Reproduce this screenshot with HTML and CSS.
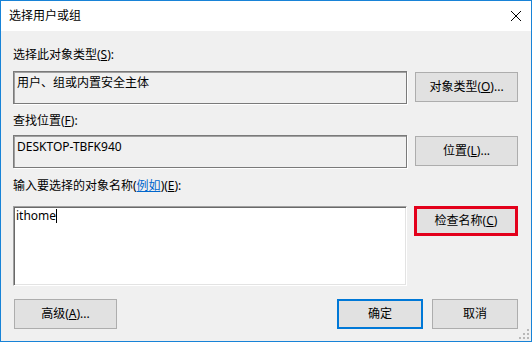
FILE: index.html
```
<!DOCTYPE html>
<html lang="zh-CN">
  <head>
    <meta charset="utf-8">
    <title>选择用户或组</title>
    <link rel="stylesheet" href="styles.css">
  </head>
  <body>
    <div class="window">
      <div class="titlebar">
        <span class="title">选择用户或组</span>
        <svg class="close" width="12" height="12" viewBox="0 0 12 12">
          <path d="M1 1 L11 11 M11 1 L1 11" stroke="#000" stroke-width="1" fill="none"/>
        </svg>
      </div>

      <div class="content">
        <div class="label">选择此对象类型(<u>S</u>):</div>
        <div class="row row-1">
          <div class="field readonly">用户、组或内置安全主体</div>
          <button class="btn">对象类型(<u>O</u>)...</button>
        </div>

        <div class="label label-2">查找位置(<u>F</u>):</div>
        <div class="row row-2">
          <div class="field readonly">DESKTOP-TBFK940</div>
          <button class="btn">位置(<u>L</u>)...</button>
        </div>

        <div class="label label-3">输入要选择的对象名称(<a href="#">例如</a>)(<u>E</u>):</div>
        <div class="row row-3">
          <div class="field editable">ithome<span class="caret"></span></div>
          <button class="btn marked">检查名称(<u>C</u>)</button>
        </div>

        <div class="footer">
          <button class="btn btn-advanced">高级(<u>A</u>)...</button>
          <div class="actions">
            <button class="btn btn-wide default">确定</button>
            <button class="btn btn-wide">取消</button>
          </div>
        </div>
      </div>

      <svg class="grip" width="10" height="10" viewBox="0 0 10 10">
        <rect x="8" y="0" width="2" height="2" fill="#b8b8b8"/>
        <rect x="4" y="4" width="2" height="2" fill="#b8b8b8"/>
        <rect x="8" y="4" width="2" height="2" fill="#b8b8b8"/>
        <rect x="0" y="8" width="2" height="2" fill="#b8b8b8"/>
        <rect x="4" y="8" width="2" height="2" fill="#b8b8b8"/>
        <rect x="8" y="8" width="2" height="2" fill="#b8b8b8"/>
      </svg>
    </div>
  </body>
</html>
```

FILE: styles.css
```
html, body { margin: 0; padding: 0; }
body {
  font-family: "Noto Sans", "Noto Sans CJK SC", sans-serif;
  font-size: 12px;
  color: #000;
  background: #f0f0f0;
}

.window {
  position: relative;
  width: 532px;
  height: 342px;
  box-sizing: border-box;
  border: 1px solid #1883d7;
  background: #f0f0f0;
}

.titlebar {
  height: 30px;
  background: #fff;
  display: flex;
  align-items: center;
  justify-content: space-between;
  padding: 0 9px 0 8px;
}
.title { line-height: 16px; }
.close { display: block; }

.content { padding: 16px 13px 0 12px; }

.label { line-height: 16px; height: 16px; }
.label-2 { margin-top: 9px; }
.label-3 { margin-top: 10px; }
.label a { color: #0066cc; }

.row { display: flex; gap: 8px; align-items: flex-start; }
.row-1 { margin-top: 8px; }
.row-2 { margin-top: 6px; }
.row-3 { margin-top: 12px; }

.field {
  width: 394px;
  box-sizing: border-box;
  line-height: 16px;
  padding: 3px 3px;
}
.readonly {
  height: 33px;
  border: 1px solid #7a7a7a;
  box-shadow: inset 1px 1px 0 #a0a0a0, 1px 1px 0 #fff;
}
.editable {
  height: 80px;
  background: #fff;
  padding: 1px 2px;
  border: 1px solid;
  border-color: #a0a0a0 #fff #fff #a0a0a0;
  box-shadow: inset 1px 1px 0 #696969, inset -1px -1px 0 #e3e3e3;
}
.caret {
  display: inline-block;
  width: 1px;
  height: 14px;
  background: #000;
  vertical-align: -3px;
}

.btn {
  font: inherit;
  color: #000;
  width: 103px;
  height: 30px;
  box-sizing: border-box;
  margin: 1px 0 0;
  padding: 0;
  background: #e1e1e1;
  border: 1px solid #adadad;
  line-height: 16px;
}
.btn u { text-decoration-thickness: 1px; }
.marked {
  width: 104px;
  margin: 0 0 0 -1px;
  border: 3px solid #e3001b;
}

.footer {
  margin-top: 13px;
  display: flex;
  justify-content: space-between;
  align-items: center;
}
.btn-advanced { margin: 0 0 0 1px; }
.actions { display: flex; gap: 9px; }
.btn-wide { width: 86px; margin: 0; }
.default { border: 2px solid #0078d7; }

.grip {
  position: absolute;
  right: 2px;
  bottom: 2px;
}
```
